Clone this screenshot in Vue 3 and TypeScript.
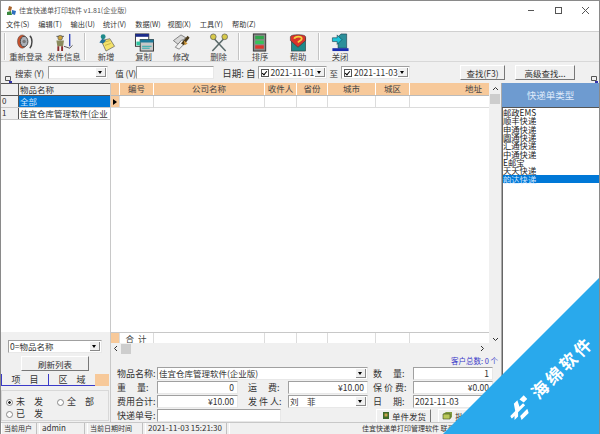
<template>
  <div class="win">
    <div class="titlebar">
      <svg class="app-ico" width="11" height="11" viewBox="0 0 11 11">
        <path d="M3 1l3 1-1 4-3-1z" fill="#a8642c" />
        <path d="M1 7l4-1 1 4H1z" fill="#3b8a3e" />
        <path d="M6 5l4 1-1 4-3-1z" fill="#2f6fc0" />
      </svg>
      <span class="title">佳宜快递单打印软件 v1.81(企业版)</span>
      <div class="win-btns">
        <svg width="9" height="9" viewBox="0 0 9 9"><path d="M1 4.5h6" stroke="#555" /></svg>
        <svg width="9" height="9" viewBox="0 0 9 9"><rect x="1.5" y="1.5" width="6" height="6" fill="none" stroke="#555" /></svg>
        <svg width="9" height="9" viewBox="0 0 9 9"><path d="M1 1l7 7M8 1L1 8" stroke="#555" /></svg>
      </div>
    </div>
    <div class="menubar">
      <span v-for="m in menus" :key="m">{{ m }}</span>
    </div>

    <div class="toolbar">
      <template v-for="group in toolGroups" :key="group[0].label">
        <div class="tool-sep"></div>
        <div v-for="t in group" :key="t.label" class="tool" :style="{ width: t.w + 'px' }">
          <svg width="22" height="19" viewBox="0 0 22 20" v-html="t.icon"></svg>
          <span>{{ t.label }}</span>
        </div>
      </template>
    </div>

    <div class="filter">
      <svg class="split split-l" width="8" height="7" viewBox="0 0 8 7"><path d="M.5.5h5v4h-5z" fill="none" stroke="#555" /><path d="M4 5h3v2H4z" fill="#33a" /></svg>
      <span class="f-label first">搜索 (Y)</span>
      <div class="combo c-search"><i class="drop"></i></div>
      <span class="f-label val-l">值 (V)</span>
      <div class="input c-value"></div>
      <span class="f-label date-l">日期: 自</span>
      <div class="combo c-date"><b class="check"></b>2021-11-01<i class="drop"></i></div>
      <span class="f-label">至</span>
      <div class="combo c-date"><b class="check"></b>2021-11-03<i class="drop"></i></div>
      <div class="spacer"></div>
      <button class="btn b-find">查找(F3)</button>
      <button class="btn b-adv">高级查找...</button>
      <svg class="split split-r" width="8" height="7" viewBox="0 0 8 7"><path d="M.5.5h5v4h-5z" fill="none" stroke="#555" /><path d="M4 5h3v2H4z" fill="#33a" /></svg>
    </div>

    <div class="main">
      <div class="left">
        <div class="tree">
          <div class="t-row t-head"><div class="t-no"></div><div class="t-name">物品名称</div></div>
          <div class="t-row"><div class="t-no">0</div><div class="t-name sel">全部</div></div>
          <div class="t-row"><div class="t-no">1</div><div class="t-name">佳宜仓库管理软件(企业</div></div>
        </div>
        <div class="combo c-item">0=物品名称<i class="drop"></i></div>
        <button class="btn b-refresh">刷新列表</button>
        <div class="tabs">
          <div class="tab">项　目</div>
          <div class="tab">区　域</div>
          <div class="tab-fill"></div>
        </div>
        <div class="radios">
          <div class="radio-row">
            <span class="radio"><i class="r on"></i>未　发</span>
            <span class="radio"><i class="r"></i>全　部</span>
          </div>
          <div class="radio-row"><span class="radio"><i class="r"></i>已　发</span></div>
        </div>
      </div>

      <div class="center">
        <div class="grid-wrap">
          <div class="grid">
            <div class="g-row g-head">
              <div class="ind"></div>
              <div v-for="c in cols" :key="c.t" class="cell" :class="{ addr: c.t === '地址' }" :style="{ width: c.w + 'px' }">{{ c.t }}</div>
            </div>
            <div class="g-row g-line">
              <div class="ind arrow"></div>
              <div v-for="c in cols" :key="c.t" class="cell" :style="{ width: c.w + 'px' }"></div>
            </div>
            <div class="g-body"></div>
            <div class="g-row g-sum">
              <div class="ind"></div>
              <div class="cell" :style="{ width: cols[0].w + 'px' }">合 计</div>
              <div v-for="c in cols.slice(1)" :key="c.t" class="cell" :style="{ width: c.w + 'px' }"></div>
            </div>
            <div class="hscroll">
              <svg width="5" height="7" viewBox="0 0 5 7"><path d="M4 1L1.500 3.500 4 6" fill="none" stroke="#333" /></svg>
              <i class="h-thumb"></i>
              <svg class="h-end" width="5" height="7" viewBox="0 0 5 7"><path d="M1 1l2.500 2.500L1 6" fill="none" stroke="#333" /></svg>
            </div>
          </div>
          <div class="vscroll">
            <svg class="v-top" width="7" height="5" viewBox="0 0 7 5"><path d="M1 4l2.500-2.500L6 4" fill="none" stroke="#333" /></svg>
            <i class="v-thumb"></i>
            <svg class="v-end" width="7" height="5" viewBox="0 0 7 5"><path d="M1 1l2.500 2.500L6 1" fill="none" stroke="#333" /></svg>
          </div>
        </div>

        <div class="count">客户总数: 0 个</div>
        <div class="form">
          <div class="f-row">
            <label class="lb">物品名称:</label>
            <div class="combo fc-name">佳宜仓库管理软件(企业版)<i class="drop"></i></div>
            <label class="lb lb2">数　 量:</label>
            <div class="input fi-r">1</div>
          </div>
          <div class="f-row">
            <label class="lb">重　 量:</label>
            <div class="input fi-mid">0</div>
            <label class="lb lb-mid">运　 费:</label>
            <div class="input fi-mid2">¥10.00</div>
            <label class="lb lb2">保 价 费:</label>
            <div class="input fi-r">¥0.00</div>
          </div>
          <div class="f-row">
            <label class="lb">费用合计:</label>
            <div class="input fi-mid">¥10.00</div>
            <label class="lb lb-mid">发 件 人:</label>
            <div class="combo fc-man">刘　菲<i class="drop"></i></div>
            <label class="lb lb2">日　 期:</label>
            <div class="input fi-r left-t">2021-11-03</div>
          </div>
          <div class="f-row">
            <label class="lb">快递单号:</label>
            <div class="input fi-no"></div>
            <button class="btn b-send">
              <svg width="9" height="9" viewBox="0 0 9 9"><rect x="2" y="1" width="6" height="7" fill="#3d6b2a" /><rect x="3.500" y="2.500" width="3" height="3" fill="#c8a24a" /></svg>
              单件发货
            </button>
            <button class="btn b-batch">
              <svg width="11" height="9" viewBox="0 0 11 9"><path d="M1 3l3-2h6v5l-2 2H1z" fill="#7f9a3e" /><path d="M1 3h7v5H1z" fill="#b9c85a" stroke="#3d4d1c" stroke-width=".6" /></svg>
              批量发货
            </button>
          </div>
        </div>
      </div>

      <div class="right">
        <div class="r-head">快递单类型</div>
        <div class="r-list">
          <div v-for="k in kinds" :key="k" class="r-item" :class="{ sel: k === '韵达快递' }">{{ k }}</div>
        </div>
      </div>
    </div>

    <div class="status">
      <span class="s w1">当前用户</span>
      <span class="s w2">admin</span>
      <span class="s w3">当前日期时间</span>
      <span class="s w4">2021-11-03 15:21:30</span>
      <span class="s grow">佳宜快递单打印管理软件 联系电话</span>
    </div>

    <div class="mark">
      <div class="mark-inner">
        <svg class="mark-logo" width="27" height="20" viewBox="0 0 27 20">
          <path d="M1 8h7l4-6h5l-3 6h5v3H9l-3 3H1l3-3H0zM8 15h10l-2 4H6zM19 3h6v5h-5z" fill="#fff" />
        </svg>
        <span>海绵软件</span>
      </div>
    </div>
  </div>
</template>

<script setup lang="ts">
const menus = ['文件(S)', '编辑(T)', '输出(U)', '统计(V)', '数据(W)', '视图(X)', '工具(Y)', '帮助(Z)']

const toolGroups = [
  [
    {
      label: '重新登录',
      w: 38,
      icon: '<ellipse cx="7" cy="9" rx="5" ry="7" fill="#c9512c" stroke="#444" stroke-width=".5"/><ellipse cx="9" cy="9" rx="4" ry="5.500" fill="#aab0b8" stroke="#444"/><circle cx="9" cy="9" r="1.800" fill="#777"/><path d="M15 3c3 2 3 10 0 13" fill="none" stroke="#444" stroke-width="1.500"/>',
    },
    {
      label: '发件信息',
      w: 38,
      icon: '<path d="M3 3h8v1H3z" fill="#555"/><circle cx="7" cy="5" r="2.500" fill="#c9a23c" stroke="#444" stroke-width=".6"/><path d="M3 8h8l-1 6H4z" fill="#8a8a5c"/><path d="M4 14h2v5H4zM8 14h2v5H8z" fill="#8a2c2c"/><path d="M17 1v13" stroke="#3a4cc0" stroke-width="1.500"/><path d="M11 14l6 2 3-3" fill="none" stroke="#555"/>',
    },
  ],
  [
    {
      label: '新增',
      w: 38,
      icon: '<path d="M6 8l9-2 5 8-9 5z" fill="#f4e26a" stroke="#555" stroke-width=".7"/><path d="M8 10l7-2M10 13l6-2" stroke="#a09030" stroke-width=".6"/><circle cx="8" cy="4" r="2.600" fill="#1f8a8a"/><path d="M4 10l3-4 4 2-3 3z" fill="#1f6f9a"/>',
    },
    {
      label: '复制',
      w: 37,
      icon: '<rect x="2" y="1" width="14" height="13" fill="#fff" stroke="#333"/><rect x="2" y="1" width="14" height="3" fill="#1c2c8a"/><rect x="7" y="7" width="14" height="12" fill="#c8c8c8" stroke="#333"/><rect x="7" y="7" width="14" height="3" fill="#1c7a9a"/><rect x="3" y="9" width="4" height="4" fill="#2ec4a0"/><path d="M9 14h10M9 16h8" stroke="#2aa"/>',
    },
    {
      label: '修改',
      w: 38,
      icon: '<path d="M3 8l8-6 5 3-8 7z" fill="#d8d8d8" stroke="#555" stroke-width=".7"/><path d="M5 15l7-8 4 3-7 7z" fill="#f0f0f0" stroke="#555" stroke-width=".7"/><path d="M11 11l7-8 2 2-6 8z" fill="#4a3a1c"/><path d="M14 8l4 3-3 2z" fill="#d09a3c"/>',
    },
    {
      label: '删除',
      w: 37,
      icon: '<path d="M5 5l13 14M17 5L4 19" stroke="#5a6a6a" stroke-width="1.600"/><circle cx="5" cy="4" r="3" fill="#d6c84a" stroke="#555" stroke-width=".7"/><circle cx="17" cy="4" r="3" fill="#d6c84a" stroke="#555" stroke-width=".7"/>',
    },
  ],
  [
    {
      label: '排序',
      w: 38,
      icon: '<rect x="4" y="1" width="13" height="18" fill="#8a8a8a" stroke="#333"/><rect x="6" y="3" width="9" height="3.500" fill="#2ea84a"/><rect x="6" y="8" width="9" height="3.500" fill="#35c45a"/><rect x="6" y="13" width="9" height="3.500" fill="#e0352c"/>',
    },
    {
      label: '帮助',
      w: 38,
      icon: '<rect x="4" y="5" width="15" height="14" fill="#1f8a8a" stroke="#333" stroke-width=".6"/><path d="M3 4c0-3 16-3 16 0v4l-8 7-8-7z" fill="#d8342c" stroke="#333" stroke-width=".6"/><path d="M7 6c1-3 8-3 8 0 0 2-3 2-4 4" fill="none" stroke="#f2d23c" stroke-width="1.800"/>',
    },
  ],
  [
    {
      label: '关闭',
      w: 38,
      icon: '<path d="M12 1h6v15h-9V4z" fill="#2c8f9a" stroke="#134" stroke-width=".6"/><path d="M3 5h5V2l5 5-5 5V9H3z" fill="#1fc4d8" stroke="#134" stroke-width=".6"/><rect x="3" y="16" width="17" height="3" fill="#1a2cb0"/>',
    },
  ],
]

const cols = [
  { t: '编号', w: 34 },
  { t: '公司名称', w: 111 },
  { t: '收件人', w: 32 },
  { t: '省份', w: 31 },
  { t: '城市', w: 48 },
  { t: '城区', w: 34 },
  { t: '地址', w: 80 },
]

const kinds = ['邮政EMS', '顺丰快递', '申通快递', '圆通快递', '汇通快递', '中通快递', 'E邮宝', '天天快递', '韵达快递']
</script>

<style>
html,
body {
  margin: 0;
  background: #f0f0f0;
}
</style>

<style scoped>
.win {
  position: relative;
  width: 600px;
  height: 434px;
  box-sizing: border-box;
  overflow: hidden;
  display: flex;
  flex-direction: column;
  background: #f0f0f0;
  border-top: 1px solid #8a8a8a;
  border-left: 1px solid #8a8a8a;
  border-right: 1px solid #8a8a8a;
  font-family: "Noto Sans CJK SC", "Liberation Sans", sans-serif;
  font-size: 9px;
  color: #333;
}
.titlebar {
  height: 18px;
  flex: none;
  background: #fff;
  display: flex;
  align-items: center;
  padding-left: 5px;
}
.title {
  margin-left: 2px;
  font-size: 7px;
  color: #555;
}
.win-btns {
  margin-left: auto;
  display: flex;
  gap: 18px;
  padding-right: 9px;
}
.menubar {
  height: 11px;
  flex: none;
  background: #fff;
  display: flex;
  padding-left: 5px;
  line-height: 11px;
  font-size: 7.2px;
  padding-bottom: 1px;
}
.menubar span {
  width: 32.3px;
}
.toolbar {
  height: 31px;
  flex: none;
  display: flex;
  align-items: stretch;
  border-top: 1px solid #d0d0d0;
  border-bottom: 1px solid #d8d8d8;
  padding-left: 2px;
  box-sizing: border-box;
}
.tool-sep {
  width: 1px;
  margin: 1px 1px;
  background: #c4c4c4;
  border-right: 1px solid #fff;
}
.tool {
  display: flex;
  flex-direction: column;
  align-items: center;
  font-size: 8.4px;
  line-height: 9px;
  color: #444;
}
.tool svg {
  margin-top: 1px;
}
.filter {
  position: relative;
  height: 20px;
  flex: none;
  display: flex;
  align-items: center;
  padding-top: 1px;
  box-sizing: border-box;
}
.split {
  position: absolute;
  top: 14px;
}
.split-l {
  left: 4px;
}
.split-r {
  right: 0;
}
.f-label {
  margin: 0 3px;
  font-size: 8.5px;
  white-space: nowrap;
}
.f-label.first {
  margin-left: 14px;
  margin-right: 4px;
}
.f-label.val-l {
  margin-left: 7px;
  margin-right: 0;
}
.f-label.date-l {
  margin-left: 8px;
  margin-right: 2px;
  font-size: 9.5px;
}
.spacer {
  flex: 1;
}
.combo,
.input {
  position: relative;
  box-sizing: border-box;
  height: 13px;
  line-height: 11px;
  background: #fff;
  border-top: 1px solid #a0a0a0;
  border-left: 1px solid #a0a0a0;
  border-right: 1px solid #e8e8e8;
  border-bottom: 1px solid #e8e8e8;
  font-size: 8.5px;
  padding-left: 1px;
  white-space: nowrap;
  overflow: hidden;
}
.drop {
  position: absolute;
  right: 1px;
  top: 1px;
  bottom: 1px;
  width: 10px;
  background: #f0f0f0;
  border-right: 1px solid #888;
  border-bottom: 1px solid #888;
  box-sizing: border-box;
}
.drop::after {
  content: "";
  position: absolute;
  left: 2px;
  top: 3px;
  border: 2.5px solid transparent;
  border-top: 3px solid #000;
  border-bottom: 0;
}
.c-search {
  width: 60px;
}
.c-value {
  width: 78px;
}
.c-date {
  width: 69px;
  display: flex;
  align-items: center;
}
.check {
  flex: none;
  width: 8px;
  height: 8px;
  border: 1px solid #555;
  box-sizing: border-box;
  margin: 0 2px 0 1px;
  position: relative;
}
.check::after {
  content: "";
  position: absolute;
  left: 1px;
  top: 0;
  width: 2px;
  height: 4px;
  border-right: 1px solid #000;
  border-bottom: 1px solid #000;
  transform: rotate(40deg);
}
.btn {
  font-family: inherit;
  font-size: 8.5px;
  color: #333;
  background: #f0f0f0;
  padding: 0;
  box-sizing: border-box;
  border-top: 1px solid #fff;
  border-left: 1px solid #fff;
  border-right: 1px solid #777;
  border-bottom: 1px solid #777;
  display: flex;
  align-items: center;
  justify-content: center;
  gap: 2px;
}
.b-find {
  width: 45px;
  height: 15px;
}
.b-adv {
  width: 60px;
  height: 15px;
  margin: 0 24px 0 10px;
}
.main {
  flex: 1;
  min-height: 0;
  display: flex;
  padding-top: 1px;
}
.left {
  width: 109px;
  flex: none;
  display: flex;
  flex-direction: column;
  border-right: 1px solid #c8c8c8;
}
.tree {
  flex: 1;
  min-height: 0;
  background: #fff;
  overflow: hidden;
}
.t-row {
  display: flex;
  height: 11px;
  line-height: 10px;
  border-bottom: 1px solid #c8c8c8;
}
.t-head {
  background: #f0f0f0;
  border-top: 1px solid #555;
  border-bottom: 1px solid #555;
}
.t-no {
  width: 18px;
  flex: none;
  background: #f0f0f0;
  border-right: 1px solid #555;
  padding-left: 1px;
  box-sizing: border-box;
  font-size: 8px;
}
.t-name {
  flex: 1;
  padding-left: 1px;
  white-space: nowrap;
  overflow: hidden;
  font-size: 8.5px;
}
.t-name.sel {
  background: #0078d7;
  color: #cfe6ff;
}
.c-item {
  flex: none;
  width: 94px;
  margin: 8px 0 3px 7px;
}
.b-refresh {
  flex: none;
  width: 68px;
  height: 15px;
  margin: 0 0 3px 20px;
}
.tabs {
  flex: none;
  display: flex;
  height: 12px;
  line-height: 12px;
  font-size: 9px;
}
.tab {
  width: 47px;
  text-align: center;
  border-left: 1px solid #3a3ac8;
  border-bottom: 1px solid #3a3ac8;
  box-sizing: border-box;
}
.tab-fill {
  width: 14px;
  background: #f7c99a;
}
.radios {
  flex: none;
  margin: 4px 1px 1px 0;
  height: 31px;
  border: 1px solid #d8d8d8;
  box-sizing: border-box;
  padding: 5px 0 0 4px;
}
.radio-row {
  display: flex;
  height: 12px;
  line-height: 12px;
}
.radio {
  width: 51px;
  display: flex;
  align-items: center;
  gap: 3px;
  font-size: 9px;
}
.r {
  width: 5px;
  height: 5px;
  border: 1px solid #888;
  border-radius: 50%;
  background: #fff;
}
.r.on {
  background: radial-gradient(circle, #222 1.2px, #fff 1.5px);
}
.center {
  flex: 1;
  min-width: 0;
  display: flex;
  flex-direction: column;
}
.grid-wrap {
  flex: 1;
  min-height: 0;
  display: flex;
}
.grid {
  flex: 1;
  min-width: 0;
  display: flex;
  flex-direction: column;
  background: #fff;
}
.g-row {
  display: flex;
  flex: none;
  height: 12px;
}
.g-head {
  background: #f7c99a;
  border-bottom: 1px solid #bbb;
  line-height: 11px;
}
.g-line {
  height: 11px;
  border-bottom: 1px solid #dcdcdc;
}
.g-body {
  flex: 1;
}
.g-sum {
  height: 10px;
  line-height: 10px;
  border-top: 1px solid #c8c8c8;
  letter-spacing: 1px;
}
.ind {
  width: 8px;
  flex: none;
  background: #f7c99a;
  position: relative;
}
.ind.arrow::after {
  content: "";
  position: absolute;
  left: 2px;
  top: 3px;
  border: 3px solid transparent;
  border-left: 4px solid #000;
  border-right: 0;
}
.cell {
  box-sizing: border-box;
  border-left: 1px solid #dcdcdc;
  text-align: center;
  flex: none;
  font-size: 8.5px;
  color: #444;
}
.g-head .cell {
  border-left: 1px solid #fff;
}
.cell.addr {
  text-align: right;
  padding-right: 7px;
}
.hscroll {
  flex: none;
  height: 11px;
  background: #f0f0f0;
  display: flex;
  align-items: center;
  padding: 0 4px 0 2px;
}
.h-thumb {
  width: 10px;
  height: 10px;
  background: #cdcdcd;
  margin-left: 3px;
}
.h-end {
  margin-left: auto;
}
.vscroll {
  flex: none;
  width: 12px;
  background: #f0f0f0;
  display: flex;
  flex-direction: column;
  align-items: center;
}
.v-top {
  margin-top: 3px;
}
.v-thumb {
  width: 10px;
  height: 10px;
  background: #cdcdcd;
  margin-top: 3px;
}
.v-end {
  margin-top: auto;
  margin-bottom: 12px;
}
.count {
  flex: none;
  height: 13px;
  line-height: 13px;
  text-align: right;
  color: #3a3ac8;
  font-size: 7.5px;
  padding-right: 3px;
  box-sizing: border-box;
}
.form {
  flex: none;
  display: flex;
  flex-direction: column;
  gap: 1px;
  padding-left: 6px;
}
.f-row {
  display: flex;
  align-items: center;
  height: 13px;
}
.lb {
  width: 40px;
  flex: none;
  font-size: 9px;
  white-space: nowrap;
}
.lb2 {
  margin-left: 5px;
}
.lb-mid {
  margin-left: 10px;
}
.fc-name {
  width: 211px;
}
.fi-mid {
  width: 81px;
  text-align: right;
  padding-right: 3px;
}
.fi-mid2 {
  width: 80px;
  text-align: right;
  padding-right: 3px;
}
.fc-man {
  width: 80px;
}
.fi-r {
  width: 80px;
  text-align: right;
  padding-right: 3px;
}
.fi-r.left-t {
  text-align: left;
  padding-left: 1px;
}
.fi-no {
  width: 124px;
}
.b-send {
  width: 55px;
  height: 14px;
  margin-left: 95px;
}
.b-batch {
  width: 55px;
  height: 14px;
  margin-left: 7px;
}
.right {
  width: 97px;
  flex: none;
  display: flex;
  flex-direction: column;
  border-left: 1px solid #aaa;
  background: #f0f0f0;
}
.r-head {
  height: 24px;
  flex: none;
  background: #6e9bd0;
  color: #dfeafa;
  text-align: center;
  line-height: 24px;
  font-size: 9.5px;
  border-bottom: 1px solid #555;
}
.r-list {
  flex: 1;
  background: #fff;
  border-left: 1px solid #666;
}
.r-item {
  height: 8.33px;
  line-height: 8.33px;
  font-size: 8.3px;
  color: #222;
  white-space: nowrap;
}
.r-item.sel {
  background: #0078d7;
  color: #cfe6ff;
}
.status {
  flex: none;
  height: 11px;
  display: flex;
  gap: 2px;
  line-height: 10px;
  font-size: 7px;
  border-top: 1px solid #c8c8c8;
}
.s {
  box-sizing: border-box;
  border-right: 1px solid #c0c0c0;
  border-left: 1px solid #fff;
  padding-left: 2px;
  white-space: nowrap;
}
.w1 {
  width: 36px;
}
.w2 {
  width: 46px;
  font-size: 8px;
}
.w3 {
  width: 56px;
}
.w4 {
  width: 82px;
  font-size: 8px;
}
.grow {
  flex: 1;
  padding-left: 132px;
  border-right: 0;
}
.mark {
  position: absolute;
  right: -1px;
  bottom: 0;
  width: 157px;
  height: 157px;
  background: #29a9ec;
  clip-path: polygon(100% 0, 100% 100%, 0 100%);
}
.mark-inner {
  position: absolute;
  left: 68px;
  top: 131px;
  height: 20px;
  display: flex;
  align-items: center;
  gap: 5px;
  color: #fff;
  font-size: 17px;
  line-height: 20px;
  font-weight: 700;
  letter-spacing: 3px;
  white-space: nowrap;
  transform: rotate(-45deg);
  transform-origin: left center;
}
.mark-logo {
  flex: none;
}
</style>
